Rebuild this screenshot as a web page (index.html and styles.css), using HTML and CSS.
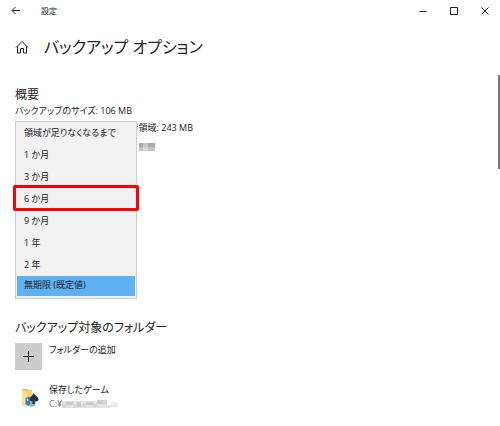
FILE: index.html
```html
<!DOCTYPE html>
<html lang="ja">
<head>
    <meta charset="UTF-8">
    <meta name="viewport" content="width=device-width, initial-scale=1.0">
    <title>設定</title>
    <link rel="stylesheet" href="styles.css">
</head>
<body>
    <header class="titlebar">
        <button class="icon-button" aria-label="戻る">
            <svg width="10" height="10" viewBox="0 0 10 10"><path d="M9 4.5H1M4.500 1L1 4.500l3.500 3.500"/></svg>
        </button>
        <span class="app-name">設定</span>
        <div class="window-buttons">
            <button class="icon-button" aria-label="最小化">
                <svg width="8" height="8" viewBox="0 0 8 8"><path d="M0.5 4.5h7"/></svg>
            </button>
            <button class="icon-button" aria-label="最大化">
                <svg width="8" height="8" viewBox="0 0 8 8"><path d="M0.5 0.5h7v7h-7z"/></svg>
            </button>
            <button class="icon-button" aria-label="閉じる">
                <svg width="8" height="8" viewBox="0 0 8 8"><path d="M0.5 0.5l7 7M7.5 0.5l-7 7"/></svg>
            </button>
        </div>
    </header>

    <main class="content">
        <div class="page-title">
            <svg class="home" width="14" height="14" viewBox="0 0 14 14"><path d="M1 7.5L7 1.5l6 6M2.5 6.5v6.5h3v-4.5h3v4.5h3V6.5"/></svg>
            <h1>バックアップ オプション</h1>
        </div>

        <section class="overview">
            <h2>概要</h2>
            <p>バックアップのサイズ: 106 MB</p>
            <div class="drive">
                <p class="drive-space">き領域: 243 MB</p>
                <div class="drive-date">
                    <svg width="18" height="8" viewBox="0 0 18 8" shape-rendering="crispEdges">
                        <path fill="#aaa" d="M0 0h4v4H0zM9 0h7v4H9z"/>
                        <path fill="#c4c4c4" d="M4 0h5v4H4zM0 4h4v4H0zM9 4h7v4H9z"/>
                        <path fill="#d6d6d6" d="M4 4h5v4H4z"/>
                        <path fill="#f2f2f2" d="M16 0h2v4h-2z"/>
                    </svg>
                </div>
                <div class="menu">
                    <select class="menu-list" size="8" aria-label="バックアップを保持">
                        <option>領域が足りなくなるまで</option>
                        <option>1 か月</option>
                        <option>3 か月</option>
                        <option>6 か月</option>
                        <option>9 か月</option>
                        <option>1 年</option>
                        <option>2 年</option>
                        <option selected>無期限 (既定値)</option>
                    </select>
                    <div class="marker"></div>
                </div>
            </div>
        </section>

        <section class="folders">
            <h2>バックアップ対象のフォルダー</h2>
            <div class="folder-row">
                <button class="add-button" id="add-folder" aria-labelledby="add-label">
                    <svg width="11" height="11" viewBox="0 0 11 11"><path d="M5.5 0v11M0 5.5h11"/></svg>
                </button>
                <label id="add-label" for="add-folder">フォルダーの追加</label>
            </div>
            <div class="folder-row saved">
                <div class="folder-icon">
                    <svg width="18" height="20" viewBox="0 0 18 20">
                        <path fill="#e8bd55" d="M1 1h5l1 1h4v15H1z"/>
                        <path fill="#ffe08a" d="M1 2l7 1.5V18l-7-2z"/>
                        <path fill="#fbd36f" d="M6 3h5v11H6z"/>
                        <path fill="#2f83c8" d="M4.5 10l4-1.5 2 8-3.5 1.5-2.5-2z"/>
                        <path fill="#d9edf8" d="M5.5 11l1.5-.5.5 2-1.5.5z"/>
                        <path fill="#9aafbd" d="M9 13l6-1-1 6-5 1z"/>
                        <path fill="#27343e" d="M12.5 5c1 2.5 5 3.5 5 6.5 0 2-2.500 2.500-4 1.500l.7 3h-3l.5-3c-2 .8-3.500-.5-3-2.500.5-2 3-2.500 3.800-5.500z"/>
                    </svg>
                </div>
                <div class="folder-text">
                    <p>保存したゲーム</p>
                    <p class="path">C:¥<svg width="57" height="10" viewBox="0 0 57 10" shape-rendering="crispEdges">
                        <path fill="#e4e4e4" d="M0 2h45v7H0zM45 6h4v3h-4z"/>
                        <path fill="#cbcbcb" d="M4 3h7v3H4zM15 3h4v5h-4zM24 3h7v3h-7zM35 1h6v4h-6z"/>
                        <path fill="#d6d6d6" d="M0 5h4v4H0zM11 5h4v4h-4zM31 4h4v4h-4zM41 1h4v5h-4zM20 5h4v3h-4z"/>
                        <path fill="#ececec" d="M49 3h7v5h-7z"/>
                    </svg></p>
                </div>
            </div>
        </section>
    </main>
    <div class="scrollbar"></div>
</body>
</html>
```
FILE: styles.css
```css
/* General Styles */
* {
    box-sizing: border-box;
}

body {
    margin: 0;
    background-color: #fff;
    color: #222;
    font-family: "Open Sans", "Noto Sans CJK JP", sans-serif;
    font-feature-settings: "palt";
    font-size: 9px;
    line-height: 14px;
}

h1, h2, p {
    margin: 0;
    font-weight: 400;
}

h1 {
    font-size: 16px;
    line-height: 24px;
}

h2 {
    font-size: 12px;
    line-height: 18px;
}

button {
    padding: 0;
    border: none;
    background: none;
}

svg {
    display: block;
    fill: none;
}

.icon-button svg, .home, .add-button svg {
    stroke: #222;
    stroke-width: 1;
}

/* Title bar */
.titlebar {
    display: flex;
    align-items: center;
    height: 21px;
    padding-left: 11px;
}

.icon-button {
    display: flex;
    align-items: center;
    justify-content: center;
    width: 10px;
    height: 21px;
}

.app-name {
    margin-left: 20px;
    font-size: 8px;
}

.window-buttons {
    display: flex;
    margin-left: auto;
}

.window-buttons .icon-button {
    width: 31px;
}

/* Content */
.content {
    padding: 14px 15px 16px;
}

.page-title {
    display: flex;
    align-items: center;
    gap: 15px;
}

.overview {
    margin-top: 27px;
}

.drive {
    position: relative;
    width: 178px;
    height: 178px;
    margin-top: 3px;
}

.drive-space {
    text-align: right;
}

.drive-date {
    display: flex;
    justify-content: flex-end;
    padding: 8px 36px 0 0;
}

/* Open drop-down lying over the drive details */
.menu {
    position: absolute;
    top: 0;
    left: 0;
    width: 122px;
}

.menu-list {
    display: block;
    width: 100%;
    height: 178px;
    padding: 0 1px 2px;
    overflow: hidden;
    border: 1px solid #ccc;
    border-radius: 0;
    outline: none;
    background-color: #f1f1f1;
    color: #222;
    font: inherit;
    font-feature-settings: inherit;
}

.menu-list option {
    height: 22px;
    min-height: 20px;
    padding: 4px 7px 0;
    line-height: 14px;
}

.menu-list option:checked {
    height: 20px;
    padding-top: 2px;
    background: linear-gradient(#5eb1f3, #5eb1f3);
    color: #222;
}

.marker {
    position: absolute;
    top: 64px;
    left: -2px;
    right: -2px;
    height: 26px;
    border: 3px solid #fe0000;
    border-radius: 2px;
    pointer-events: none;
}

/* Folders */
.folders {
    margin-top: 20px;
}

.folder-row {
    display: flex;
    gap: 7px;
    margin-top: 6px;
}

.add-button {
    display: flex;
    align-items: center;
    justify-content: center;
    width: 27px;
    height: 27px;
    background-color: #ccc;
}

.saved {
    margin-top: 13px;
}

.folder-icon {
    display: flex;
    justify-content: flex-end;
    width: 27px;
    padding: 5px 3px 0 0;
}

.path {
    display: flex;
    align-items: center;
    color: #777;
}

.scrollbar {
    position: fixed;
    top: 75px;
    right: 0;
    width: 2px;
    height: 94px;
    background-color: #777;
}
```
